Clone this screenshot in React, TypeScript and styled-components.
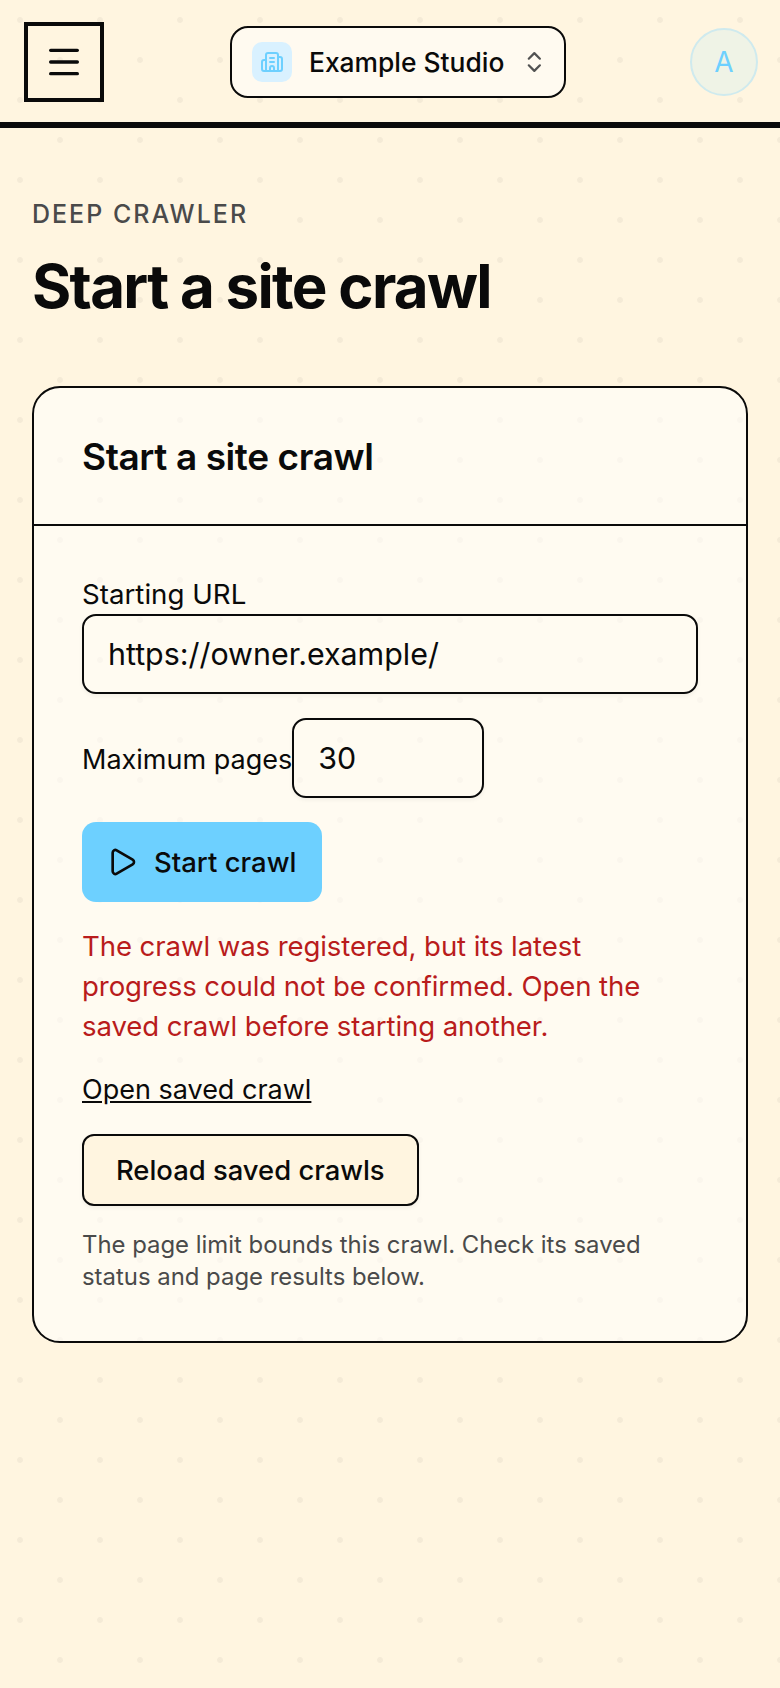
import styled, { createGlobalStyle } from "styled-components";
import { Building2, ChevronsUpDown, Menu, Play } from "lucide-react";

const INK = "#0a0a0a";
const SKY = "#6dd0ff";

const App = () => {
  return (
    <>
      <GlobalStyle />
      <Header>
        <MenuButton aria-label="Open menu">
          <Menu size={40} strokeWidth={2} />
        </MenuButton>
        <Switcher>
          <SwitcherIcon>
            <Building2 size={24} strokeWidth={2} />
          </SwitcherIcon>
          <SwitcherName>Example Studio</SwitcherName>
          <ChevronsUpDown size={28} strokeWidth={2} color="#525252" />
        </Switcher>
        <Avatar>A</Avatar>
      </Header>
      <Main>
        <Eyebrow>Deep crawler</Eyebrow>
        <Title>Start a site crawl</Title>
        <Card>
          <CardHeader>
            <CardTitle>Start a site crawl</CardTitle>
          </CardHeader>
          <CardBody>
            <UrlField>
              Starting URL
              <TextInput defaultValue="https://owner.example/" />
            </UrlField>
            <PagesField>
              Maximum pages
              <NumberInput defaultValue="30" />
            </PagesField>
            <StartButton>
              <Play size={32} strokeWidth={2} />
              Start crawl
            </StartButton>
            <ErrorText>
              The crawl was registered, but its latest progress could not be
              confirmed. Open the saved crawl before starting another.
            </ErrorText>
            <SavedLink href="#">Open saved crawl</SavedLink>
            <ReloadButton>Reload saved crawls</ReloadButton>
            <Hint>
              The page limit bounds this crawl. Check its saved status and page
              results below.
            </Hint>
          </CardBody>
        </Card>
      </Main>
    </>
  );
};

const GlobalStyle = createGlobalStyle`
  * {
    box-sizing: border-box;
  }

  html {
    background-color: #fff5e0;
    background-image:
      radial-gradient(circle at 20px 20px, rgba(10, 10, 10, 0.045) 2.5px, transparent 3.5px),
      radial-gradient(circle at 60px 60px, rgba(10, 10, 10, 0.045) 2.5px, transparent 3.5px);
    background-size: 80px 80px;
  }

  body {
    margin: 0;
    min-height: 100vh;
    color: ${INK};
    font-family: "Inter", "Liberation Sans", sans-serif;
  }
`;

const Header = styled.header`
  display: flex;
  align-items: center;
  justify-content: space-between;
  height: 128px;
  padding: 2px 22px 0 24px;
  border-bottom: 6px solid ${INK};
`;

const MenuButton = styled.button`
  display: flex;
  align-items: center;
  justify-content: center;
  width: 80px;
  height: 80px;
  padding: 0;
  border: 4px solid ${INK};
  background: transparent;
  color: ${INK};
`;

const Switcher = styled.button`
  display: flex;
  align-items: center;
  gap: 17px;
  width: 336px;
  height: 72px;
  margin-left: 2px;
  padding: 0 16px 0 20px;
  border: 2px solid ${INK};
  border-radius: 18px;
  background: #fffaf0;
  color: ${INK};
  font-family: inherit;
`;

const SwitcherIcon = styled.span`
  display: flex;
  flex: none;
  align-items: center;
  justify-content: center;
  width: 40px;
  height: 40px;
  border-radius: 10px;
  background: #d9f1ff;
  color: ${SKY};
`;

const SwitcherName = styled.span`
  flex: 1;
  font-size: 26.4px;
  font-weight: 470;
  text-align: left;
  white-space: nowrap;
`;

const Avatar = styled.div`
  display: flex;
  align-items: center;
  justify-content: center;
  width: 68px;
  height: 68px;
  border: 2px solid #cfeaee;
  border-radius: 50%;
  background: #eff3e6;
  color: ${SKY};
  font-size: 28px;
`;

const Main = styled.main`
  padding: 70px 32px 64px;
`;

const Eyebrow = styled.p`
  margin: 0;
  color: #4a4a4a;
  font-size: 25px;
  font-weight: 450;
  line-height: 32px;
  letter-spacing: 0.08em;
  text-transform: uppercase;
`;

const Title = styled.h1`
  margin: 20px 0 0;
  font-size: 60px;
  font-weight: 700;
  line-height: 72px;
  letter-spacing: -1.7px;
`;

const Card = styled.section`
  margin-top: 64px;
  border: 2px solid ${INK};
  border-radius: 28px;
  background: rgba(255, 255, 255, 0.55);
`;

const CardHeader = styled.div`
  padding: 48px 48px 46px;
  border-bottom: 2px solid ${INK};
`;

const CardTitle = styled.h2`
  margin: 0;
  font-size: 37px;
  font-weight: 620;
  line-height: 42px;
  letter-spacing: -0.4px;
`;

const CardBody = styled.div`
  display: flex;
  flex-direction: column;
  align-items: flex-start;
  padding: 48px;
`;

const UrlField = styled.label`
  display: flex;
  flex-direction: column;
  width: 100%;
  font-size: 27.7px;
  line-height: 40px;
`;

const PagesField = styled.label`
  display: flex;
  align-items: baseline;
  margin-top: 24px;
  font-size: 27px;
  line-height: 40px;
`;

const TextInput = styled.input`
  width: 100%;
  height: 80px;
  padding: 0 24px;
  border: 2px solid ${INK};
  border-radius: 14px;
  outline: none;
  background: transparent;
  box-shadow: 0 2px 4px rgba(10, 10, 10, 0.05);
  color: ${INK};
  font-family: inherit;
  font-size: 30.4px;
`;

const NumberInput = styled(TextInput)`
  width: 192px;
`;

const StartButton = styled.button`
  display: flex;
  align-items: center;
  gap: 16px;
  height: 80px;
  margin-top: 24px;
  padding: 0 26px 0 24px;
  border: 0;
  border-radius: 14px;
  background: ${SKY};
  color: ${INK};
  font-family: inherit;
  font-size: 27.5px;
  font-weight: 470;
`;

const ErrorText = styled.p`
  max-width: 590px;
  margin: 24px 0 0;
  color: #b91c1c;
  font-size: 27.6px;
  line-height: 40px;
  letter-spacing: -0.1px;
`;

const SavedLink = styled.a`
  margin-top: 24px;
  color: ${INK};
  font-size: 27px;
  line-height: 40px;
`;

const ReloadButton = styled.button`
  height: 72px;
  margin-top: 24px;
  padding: 0 32px;
  border: 2px solid ${INK};
  border-radius: 12px;
  background: #fff5e0;
  box-shadow: 0 2px 4px rgba(10, 10, 10, 0.05);
  color: ${INK};
  font-family: inherit;
  font-size: 27.4px;
  font-weight: 470;
`;

const Hint = styled.p`
  margin: 23px 0 0;
  color: #4a4a4a;
  font-size: 23.9px;
  line-height: 32px;
`;

export default App;
